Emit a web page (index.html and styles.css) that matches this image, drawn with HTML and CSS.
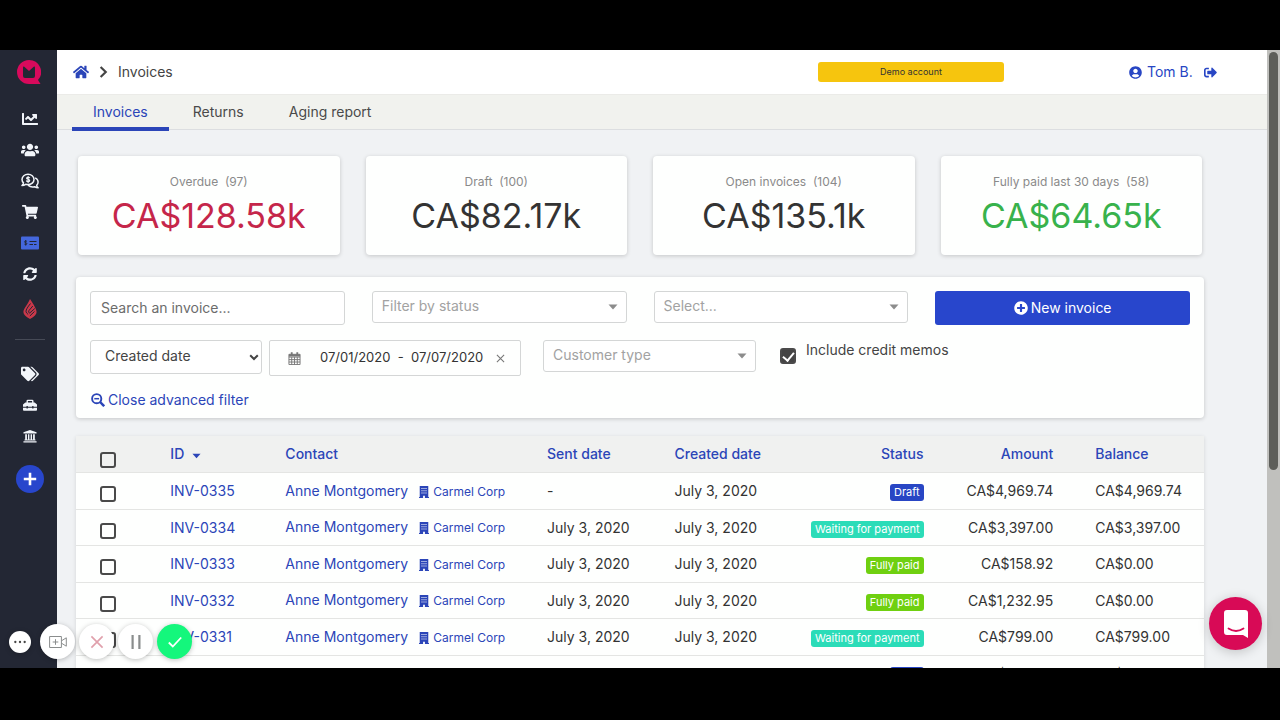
FILE: index.html
```html
<!DOCTYPE html>
<html lang="en">
<head>
    <meta charset="UTF-8">
    <meta name="viewport" content="width=device-width, initial-scale=1.0">
    <title>Invoices</title>
    <link rel="stylesheet" href="styles.css">
</head>
<body>
    <!-- Icon set -->
    <svg class="sprite" aria-hidden="true">
        <symbol id="i-logo" viewBox="0 0 24 24"><path fill="#d80a5c" d="M12 0a12 12 0 1 0 0 24h11.500l-2.500-4A12 12 0 0 0 12 0z"/><path fill="#232734" d="M6 7.500q0-1.500 1.300-.7L12 11l4.700-4.200Q18 6 18 7.500V16q0 2-2 2H8q-2 0-2-2z"/></symbol>
        <symbol id="i-chart" viewBox="0 0 512 512"><path d="M496 384H64V80c0-8.840-7.160-16-16-16H16C7.160 64 0 71.160 0 80v336c0 17.670 14.330 32 32 32h464c8.840 0 16-7.160 16-16v-32c0-8.840-7.160-16-16-16zM464 96H345.940c-21.380 0-32.090 25.850-16.970 40.970l32.400 32.400L288 242.750l-73.370-73.370c-12.500-12.500-32.760-12.500-45.250 0l-68.690 68.690c-6.250 6.250-6.250 16.380 0 22.630l22.620 22.620c6.250 6.250 16.380 6.250 22.630 0L192 237.250l73.370 73.370c12.500 12.500 32.760 12.500 45.250 0l96-96 32.400 32.400c15.120 15.120 40.970 4.410 40.970-16.970V112c.01-8.840-7.150-16-15.990-16z"/></symbol>
        <symbol id="i-users" viewBox="0 0 640 512"><path d="M96 224c35.300 0 64-28.700 64-64s-28.700-64-64-64-64 28.700-64 64 28.700 64 64 64zm448 0c35.300 0 64-28.700 64-64s-28.700-64-64-64-64 28.700-64 64 28.700 64 64 64zm32 32h-64c-17.600 0-33.500 7.100-45.100 18.600 40.300 22.100 68.900 62 75.100 109.400h66c17.700 0 32-14.300 32-32v-32c0-35.300-28.700-64-64-64zm-256 0c61.900 0 112-50.100 112-112S381.900 32 320 32 208 82.100 208 144s50.100 112 112 112zm76.800 32h-8.300c-20.800 10-43.900 16-68.500 16s-47.600-6-68.500-16h-8.300C179.600 288 128 339.600 128 403.200V432c0 26.500 21.500 48 48 48h288c26.500 0 48-21.500 48-48v-28.800c0-63.600-51.600-115.200-115.200-115.200zm-223.700-13.400C161.500 263.100 145.600 256 128 256H64c-35.300 0-64 28.700-64 64v32c0 17.700 14.300 32 32 32h65.900c6.300-47.400 34.900-87.300 75.200-109.400z"/></symbol>
        <symbol id="i-comments" viewBox="0 0 18 16"><g fill="none" stroke="currentColor" stroke-width="1.500" stroke-linecap="round" stroke-linejoin="round"><path d="M7 1.200C3.700 1.200 1 3.500 1 6.400c0 1.400.6 2.600 1.500 3.500-.2 1-.8 1.900-1.500 2.600 1.400 0 2.700-.5 3.700-1.200.7.2 1.500.3 2.300.3 3.300 0 6-2.300 6-5.200S10.300 1.200 7 1.200z"/><path d="M14.500 5.200c1.600.8 2.600 2.200 2.600 3.900 0 1.300-.6 2.400-1.400 3.200.2 1 .6 1.800 1.400 2.500-1.300 0-2.500-.4-3.500-1.100-2.400.6-4.800 0-6.200-1.300"/><path stroke-width="1.200" d="M8.600 4.700C7.800 4 5.600 4 5.600 5.300c0 1.500 3.100.7 3.100 2.200 0 1.300-2.300 1.300-3.200.5M7.100 3.400v6"/></g></symbol>
        <symbol id="i-cart" viewBox="0 0 576 512"><path d="M528.120 301.319l47.273-208C578.806 78.301 567.391 64 551.990 64H159.208l-9.166-44.810C147.758 8.021 137.930 0 126.529 0H24C10.745 0 0 10.745 0 24v16c0 13.255 10.745 24 24 24h69.883l70.248 343.435C147.325 417.100 136 435.222 136 456c0 30.928 25.072 56 56 56s56-25.072 56-56c0-15.674-6.447-29.835-16.824-40h209.647C430.447 426.165 424 440.326 424 456c0 30.928 25.072 56 56 56s56-25.072 56-56c0-22.172-12.888-41.332-31.579-50.405l5.517-24.276c3.413-15.018-8.002-29.319-23.403-29.319H218.117l-6.545-32h293.145c11.206 0 20.920-7.754 23.403-18.681z"/></symbol>
        <symbol id="i-check-note" viewBox="0 0 18 14"><rect width="18" height="13" y=".5" rx="1"/><g fill="none" stroke="#232734"><path stroke-width=".9" d="M5.800 5.400c-.7-.6-2.300-.5-2.300.5 0 1.200 2.400.6 2.400 1.800 0 1-1.700 1.100-2.500.4M4.700 4v5.600"/><path d="M8.500 5.500h7M8.500 8.500h3.500M13 8.500h2.500"/></g></symbol>
        <symbol id="i-sync" viewBox="0 0 512 512"><path d="M370.720 133.280C339.458 104.008 298.888 87.962 255.848 88c-77.458.068-144.328 53.178-162.791 126.850-1.344 5.363-6.122 9.150-11.651 9.150H24.103c-7.498 0-13.194-6.807-11.807-14.176C33.933 94.924 134.813 8 256 8c66.448 0 126.791 26.136 171.315 68.685L463.030 40.970C478.149 25.851 504 36.559 504 57.941V192c0 13.255-10.745 24-24 24H345.941c-21.382 0-32.090-25.851-16.971-40.971l41.750-41.749zM32 296h134.059c21.382 0 32.090 25.851 16.971 40.971l-41.750 41.750c31.262 29.273 71.835 45.319 114.876 45.280 77.418-.07 144.315-53.144 162.787-126.849 1.344-5.363 6.122-9.150 11.651-9.150h57.304c7.498 0 13.194 6.807 11.807 14.176C478.067 417.076 377.187 504 256 504c-66.448 0-126.791-26.136-171.315-68.685L48.970 471.030C33.851 486.149 8 475.441 8 454.059V320c0-13.255 10.745-24 24-24z"/></symbol>
        <symbol id="i-flame" viewBox="0 0 14 20"><path fill="#c9384a" d="M7 0C8.500 2.500 13.600 9.200 13.600 13q0 3.500-6.600 7Q.4 16.500.4 13C.4 9.800 5 5 7 0z"/><path fill="none" stroke="#232734" stroke-width="1" d="M7.500 4.500Q3 10 3 12.300q0 1.700 2.200 3.200M9.800 7L6 11.500q-1 1.500.5 2.700L11.800 9.500M6.800 17l4.700-4.500"/></symbol>
        <symbol id="i-tags" viewBox="0 0 640 512"><path d="M497.941 225.941L286.059 14.059A48 48 0 0 0 252.118 0H48C21.490 0 0 21.490 0 48v204.118a48 48 0 0 0 14.059 33.941l211.882 211.882c18.744 18.745 49.136 18.746 67.882 0l204.118-204.118c18.745-18.745 18.745-49.137 0-67.882zM112 160c-26.510 0-48-21.490-48-48s21.490-48 48-48 48 21.490 48 48-21.490 48-48 48zm513.941 133.823L421.823 497.941c-18.745 18.745-49.137 18.745-67.882 0l-.36-.36L527.640 323.522c16.999-16.999 26.360-39.600 26.360-63.640s-9.362-46.641-26.360-63.640L331.397 0h48.721a48 48 0 0 1 33.941 14.059l211.882 211.882c18.745 18.745 18.745 49.137 0 67.882z"/></symbol>
        <symbol id="i-toolbox" viewBox="0 0 16 14"><path fill-rule="evenodd" d="M4 4V2.500Q4 1 5.500 1h5Q12 1 12 2.500V4h1.300L16 6.500V9h-4V8h-1.500v1h-5V8H4v1H0V6.500L2.700 4zm1.600 0h4.800V2.500H5.600zM0 10h4v1h1.500v-1h5v1H12v-1h4v2.500q0 1-1 1H1q-1 0-1-1z"/></symbol>
        <symbol id="i-bank" viewBox="0 0 16 16"><path d="M8 1l7.500 2.800V5H.5V3.800zM2.500 6h2v6h1.200V6h1.600v6h1.400V6h1.600v6h1.200V6h2v6h.8v1.200H1.700V12h.8zM.5 13.900h15V15.500H.5z"/></symbol>
        <symbol id="i-plus" viewBox="0 0 14 14"><path d="M5.700.8h2.600v4.900h4.900v2.600H8.300v4.900H5.700V8.300H.8V5.700h4.900z"/></symbol>
        <symbol id="i-home" viewBox="0 0 576 512"><path d="M280.370 148.260L96 300.110V464a16 16 0 0 0 16 16l112.060-.29a16 16 0 0 0 15.920-16V368a16 16 0 0 1 16-16h64a16 16 0 0 1 16 16v95.640a16 16 0 0 0 16 16.050L464 480a16 16 0 0 0 16-16V300L295.670 148.260a12.190 12.190 0 0 0-15.300 0zM571.600 251.470L488 182.560V44.050a12 12 0 0 0-12-12h-56a12 12 0 0 0-12 12v72.610L318.470 43a48 48 0 0 0-61 0L4.340 251.470a12 12 0 0 0-1.600 16.900l25.500 31A12 12 0 0 0 45.150 301l235.220-193.740a12.190 12.190 0 0 1 15.300 0L530.900 301a12 12 0 0 0 16.900-1.600l25.500-31a12 12 0 0 0-1.700-16.930z"/></symbol>
        <symbol id="i-right" viewBox="0 0 10 14"><path fill="none" stroke="currentColor" stroke-width="2.400" d="M1.800 1.500L7.500 7l-5.700 5.500"/></symbol>
        <symbol id="i-user" viewBox="0 0 496 512"><path d="M248 8C111 8 0 119 0 256s111 248 248 248 248-111 248-248S385 8 248 8zm0 96c48.600 0 88 39.400 88 88s-39.400 88-88 88-88-39.400-88-88 39.400-88 88-88zm0 344c-58.700 0-111.300-26.600-146.500-68.200 18.800-35.400 55.600-59.800 98.500-59.800 2.400 0 4.800.4 7.100 1.100 13 4.200 26.600 6.900 40.900 6.900 14.300 0 28-2.700 40.900-6.900 2.300-.7 4.700-1.100 7.100-1.100 42.900 0 79.700 24.400 98.500 59.800C359.300 421.400 306.700 448 248 448z"/></symbol>
        <symbol id="i-logout" viewBox="0 0 512 512"><path d="M497 273L329 441c-15 15-41 4.500-41-17v-96H152c-13.300 0-24-10.700-24-24v-96c0-13.300 10.700-24 24-24h136V88c0-21.400 25.900-32 41-17l168 168c9.300 9.400 9.300 24.600 0 34zM192 436v-40c0-6.600-5.400-12-12-12H96c-17.700 0-32-14.300-32-32V160c0-17.700 14.300-32 32-32h84c6.600 0 12-5.400 12-12V76c0-6.600-5.400-12-12-12H96c-53 0-96 43-96 96v192c0 53 43 96 96 96h84c6.600 0 12-5.400 12-12z"/></symbol>
        <symbol id="i-plus-circle" viewBox="0 0 512 512"><path d="M256 8C119 8 8 119 8 256s111 248 248 248 248-111 248-248S393 8 256 8zm144 276c0 6.600-5.400 12-12 12h-92v92c0 6.600-5.400 12-12 12h-56c-6.600 0-12-5.400-12-12v-92h-92c-6.600 0-12-5.400-12-12v-56c0-6.600 5.400-12 12-12h92v-92c0-6.600 5.400-12 12-12h56c6.600 0 12 5.400 12 12v92h92c6.600 0 12 5.400 12 12v56z"/></symbol>
        <symbol id="i-zoom-out" viewBox="0 0 14 14"><g fill="none" stroke="currentColor" stroke-width="1.900"><circle cx="5.700" cy="5.700" r="4.600"/><path stroke-width="2.400" d="M9 9l4.200 4.200"/><path stroke-width="1.500" d="M3.300 5.700h4.800"/></g></symbol>
        <symbol id="i-building" viewBox="0 0 11 13"><path fill-rule="evenodd" d="M.8 0h9.400v12H11v1H6.500v-2.500h-2V13H0v-1h.8zM2.700 2v1.200h1.200V2zM4.900 2v1.200h1.200V2zM7.100 2v1.200h1.200V2zM2.700 4.500v1.200h1.200V4.500zM4.900 4.500v1.200h1.200V4.500zM7.100 4.500v1.200h1.200V4.500zM2.700 7v1.200h1.200V7zM4.900 7v1.200h1.200V7zM7.100 7v1.200h1.200V7z"/></symbol>
        <symbol id="i-caret" viewBox="0 0 10 6"><path d="M.5.500h9L5 5.500z"/></symbol>
        <symbol id="i-chevron" viewBox="0 0 10 7"><path fill="none" stroke="currentColor" stroke-width="2" d="M1.200 1.200L5 5l3.800-3.800"/></symbol>
        <symbol id="i-calendar" viewBox="0 0 14 14"><path fill="none" stroke="currentColor" d="M1 2.500h12v11H1zM1 5.500h12M1 8.200h12M1 10.800h12M4 5.500v8M7 5.500v8M10 5.500v8"/><path d="M1 2.500h12v2.300H1zM3 .3h2v3H3zM9 .3h2v3H9z"/></symbol>
        <symbol id="i-times" viewBox="0 0 10 10"><path fill="none" stroke="currentColor" stroke-width="1.200" d="M1 1l8 8M9 1L1 9"/></symbol>
        <symbol id="i-camera" viewBox="0 0 18 14"><path fill="none" stroke="currentColor" d="M.6 1.500h11.800v11H.6zM12.500 5.800l4.800-3v8.400l-4.800-3M6.500 4.200v5.600M3.700 7h5.600"/></symbol>
        <symbol id="i-chat" viewBox="0 0 26 30"><path fill="#fff" d="M4 1h18q3 0 3 3v25l-5-3H4q-3 0-3-3V4q0-3 3-3z"/><path fill="none" stroke="#d80a56" stroke-width="1.800" stroke-linecap="round" d="M5.500 19.500q7.500 5 15 0"/></symbol>
    </svg>

    <div class="app">
        <nav class="sidebar" aria-label="Main">
            <a href="#" class="logo" aria-label="Home"><svg><use href="#i-logo"/></svg></a>
            <a href="#" aria-label="Reports"><svg class="s16"><use href="#i-chart"/></svg></a>
            <a href="#" aria-label="Contacts"><svg><use href="#i-users"/></svg></a>
            <a href="#" aria-label="Quotes"><svg><use href="#i-comments"/></svg></a>
            <a href="#" aria-label="Orders"><svg class="s16"><use href="#i-cart"/></svg></a>
            <a href="#" class="current" aria-label="Invoices"><svg><use href="#i-check-note"/></svg></a>
            <a href="#" aria-label="Sync"><svg class="s14"><use href="#i-sync"/></svg></a>
            <a href="#" class="flame" aria-label="Lightspeed"><svg class="s20"><use href="#i-flame"/></svg></a>
            <hr>
            <a href="#" aria-label="Products"><svg><use href="#i-tags"/></svg></a>
            <a href="#" aria-label="Tools"><svg class="s14"><use href="#i-toolbox"/></svg></a>
            <a href="#" aria-label="Bank"><svg class="s14"><use href="#i-bank"/></svg></a>
            <button class="add-btn" aria-label="Add"><svg><use href="#i-plus"/></svg></button>
        </nav>

        <main>
            <header class="topbar">
                <div class="breadcrumb">
                    <a href="#" aria-label="Home"><svg class="home"><use href="#i-home"/></svg></a>
                    <svg class="sep"><use href="#i-right"/></svg>
                    <span>Invoices</span>
                </div>
                <button class="demo">Demo account</button>
                <div class="account">
                    <a href="#"><svg><use href="#i-user"/></svg>Tom B.</a>
                    <a href="#" aria-label="Log out"><svg><use href="#i-logout"/></svg></a>
                </div>
            </header>

            <nav class="tabs" aria-label="Sections">
                <a href="#" class="active">Invoices</a>
                <a href="#">Returns</a>
                <a href="#">Aging report</a>
            </nav>

            <div class="content">
                <section class="cards">
                    <div class="card red"><p>Overdue &nbsp;(97)</p><strong>CA$128.58k</strong></div>
                    <div class="card"><p>Draft &nbsp;(100)</p><strong>CA$82.17k</strong></div>
                    <div class="card"><p>Open invoices &nbsp;(104)</p><strong>CA$135.1k</strong></div>
                    <div class="card green"><p>Fully paid last 30 days &nbsp;(58)</p><strong>CA$64.65k</strong></div>
                </section>

                <form class="filters">
                    <div class="filter-row">
                        <input type="text" class="field" placeholder="Search an invoice..." aria-label="Search an invoice">
                        <div class="select muted">
                            <select class="field" aria-label="Filter by status"><option>Filter by status</option></select>
                            <svg><use href="#i-caret"/></svg>
                        </div>
                        <div class="select muted">
                            <select class="field" aria-label="Select"><option>Select...</option></select>
                            <svg><use href="#i-caret"/></svg>
                        </div>
                        <button type="button" class="new-btn"><svg><use href="#i-plus-circle"/></svg>New invoice</button>
                    </div>
                    <div class="filter-row advanced">
                        <div class="dates">
                            <div class="select native">
                                <select class="field" aria-label="Date type"><option>Created date</option></select>
                                <svg><use href="#i-chevron"/></svg>
                            </div>
                            <div class="range">
                                <svg><use href="#i-calendar"/></svg>
                                <input type="text" value="07/01/2020  -  07/07/2020" aria-label="Date range">
                                <button type="button" aria-label="Clear dates"><svg><use href="#i-times"/></svg></button>
                            </div>
                        </div>
                        <div class="select muted">
                            <select class="field" aria-label="Customer type"><option>Customer type</option></select>
                            <svg><use href="#i-caret"/></svg>
                        </div>
                        <div class="memos">
                            <input type="checkbox" id="memos" checked>
                            <label for="memos">Include credit memos</label>
                        </div>
                    </div>
                    <a href="#" class="close-filter"><svg><use href="#i-zoom-out"/></svg>Close advanced filter</a>
                </form>

                <table class="invoices">
                    <colgroup>
                        <col class="c-check"><col class="c-id"><col class="c-contact"><col class="c-sent">
                        <col class="c-created"><col class="c-status"><col class="c-amount"><col class="c-balance">
                    </colgroup>
                    <thead>
                        <tr>
                            <th class="check"><input type="checkbox" aria-label="Select all"></th>
                            <th><a href="#">ID<svg class="sort"><use href="#i-caret"/></svg></a></th>
                            <th><a href="#">Contact</a></th>
                            <th><a href="#">Sent date</a></th>
                            <th><a href="#">Created date</a></th>
                            <th class="right"><a href="#">Status</a></th>
                            <th class="right"><a href="#">Amount</a></th>
                            <th><a href="#">Balance</a></th>
                        </tr>
                    </thead>
                    <tbody>
                        <tr>
                            <td class="check"><input type="checkbox" aria-label="Select INV-0335"></td>
                            <td><a href="#">INV-0335</a></td>
                            <td><a href="#">Anne Montgomery</a><a href="#" class="company"><svg><use href="#i-building"/></svg>Carmel Corp</a></td>
                            <td>-</td>
                            <td>July 3, 2020</td>
                            <td class="right"><span class="badge draft">Draft</span></td>
                            <td class="right">CA$4,969.74</td>
                            <td>CA$4,969.74</td>
                        </tr>
                        <tr>
                            <td class="check"><input type="checkbox" aria-label="Select INV-0334"></td>
                            <td><a href="#">INV-0334</a></td>
                            <td><a href="#">Anne Montgomery</a><a href="#" class="company"><svg><use href="#i-building"/></svg>Carmel Corp</a></td>
                            <td>July 3, 2020</td>
                            <td>July 3, 2020</td>
                            <td class="right"><span class="badge waiting">Waiting for payment</span></td>
                            <td class="right">CA$3,397.00</td>
                            <td>CA$3,397.00</td>
                        </tr>
                        <tr>
                            <td class="check"><input type="checkbox" aria-label="Select INV-0333"></td>
                            <td><a href="#">INV-0333</a></td>
                            <td><a href="#">Anne Montgomery</a><a href="#" class="company"><svg><use href="#i-building"/></svg>Carmel Corp</a></td>
                            <td>July 3, 2020</td>
                            <td>July 3, 2020</td>
                            <td class="right"><span class="badge paid">Fully paid</span></td>
                            <td class="right">CA$158.92</td>
                            <td>CA$0.00</td>
                        </tr>
                        <tr>
                            <td class="check"><input type="checkbox" aria-label="Select INV-0332"></td>
                            <td><a href="#">INV-0332</a></td>
                            <td><a href="#">Anne Montgomery</a><a href="#" class="company"><svg><use href="#i-building"/></svg>Carmel Corp</a></td>
                            <td>July 3, 2020</td>
                            <td>July 3, 2020</td>
                            <td class="right"><span class="badge paid">Fully paid</span></td>
                            <td class="right">CA$1,232.95</td>
                            <td>CA$0.00</td>
                        </tr>
                        <tr>
                            <td class="check"><input type="checkbox" aria-label="Select INV-0331"></td>
                            <td><a href="#">INV-0331</a></td>
                            <td><a href="#">Anne Montgomery</a><a href="#" class="company"><svg><use href="#i-building"/></svg>Carmel Corp</a></td>
                            <td>July 3, 2020</td>
                            <td>July 3, 2020</td>
                            <td class="right"><span class="badge waiting">Waiting for payment</span></td>
                            <td class="right">CA$799.00</td>
                            <td>CA$799.00</td>
                        </tr>
                        <tr>
                            <td class="check"></td>
                            <td></td>
                            <td></td>
                            <td></td>
                            <td>July 3, 2020</td>
                            <td class="right"><span class="badge draft">Draft</span></td>
                            <td class="right">CA$799.00</td>
                            <td>CA$799.00</td>
                        </tr>
                    </tbody>
                </table>
            </div>
        </main>

        <div class="scrollbar"><div class="thumb"></div></div>

        <div class="recorder">
            <button class="dots" aria-label="More"><svg viewBox="0 0 12 4"><circle cx="2" cy="2" r="1"/><circle cx="6" cy="2" r="1"/><circle cx="10" cy="2" r="1"/></svg></button>
            <button aria-label="Camera"><svg class="s20"><use href="#i-camera"/></svg></button>
            <button class="cancel" aria-label="Cancel"><svg><use href="#i-times"/></svg></button>
            <button aria-label="Pause"><svg viewBox="0 0 14 14"><path d="M2.500 0h2.200v14H2.500zM9.300 0h2.200v14H9.300z"/></svg></button>
            <button class="done" aria-label="Finish"><svg viewBox="0 0 14 14"><path fill="none" stroke="currentColor" stroke-width="1.800" d="M.8 7.500L4.800 11.500 13.200 2.500"/></svg></button>
        </div>

        <button class="chat" aria-label="Open chat"><svg><use href="#i-chat"/></svg></button>
    </div>
</body>
</html>
```

FILE: styles.css
```css
* {
    box-sizing: border-box;
}
body {
    margin: 0;
    height: 100vh;
    padding: 50px 0 52px;
    background: #000;
    color: #333;
    font-family: Inter, "Liberation Sans", sans-serif;
    font-size: 14px;
    line-height: 20px;
    overflow: hidden;
}
a {
    color: #2b45b8;
    text-decoration: none;
}
button, input, select {
    font: inherit;
    color: inherit;
}
button {
    border: none;
    padding: 0;
    cursor: pointer;
}
svg {
    fill: currentColor;
    flex: none;
}
.sprite {
    position: absolute;
    width: 0;
    height: 0;
}
.app {
    position: relative;
    display: flex;
    height: 100%;
    overflow: hidden;
    background: #f0f2f4;
}

/* Sidebar */
.sidebar {
    flex: none;
    width: 57px;
    padding: 9px 0 0 3px;
    display: flex;
    flex-direction: column;
    align-items: center;
    background: #232734;
}
.sidebar a {
    display: flex;
    align-items: center;
    height: 31px;
    color: #f2f5fa;
}
.sidebar svg {
    width: 18px;
    height: 16px;
}
.sidebar .logo {
    height: 26px;
    margin: 0 3px 18px 0;
}
.sidebar .logo svg {
    width: 24px;
    height: 24px;
}
.sidebar .s16 {
    width: 16px;
}
.sidebar .s14 {
    width: 14px;
    height: 14px;
}
.sidebar .s20 {
    height: 20px;
}
.sidebar .current {
    color: #4467dc;
}
.sidebar .flame {
    margin-top: 4px;
}
.sidebar hr {
    width: 30px;
    margin: 15px 0 18px;
    border: none;
    border-top: 1px solid #464a56;
}
.add-btn {
    width: 28px;
    height: 28px;
    margin-top: 14px;
    display: flex;
    align-items: center;
    justify-content: center;
    border-radius: 50%;
    background: #2846cc;
    color: #fff;
}
.sidebar .add-btn svg {
    width: 14px;
    height: 14px;
}

/* Header */
main {
    flex: 1;
    min-width: 0;
    overflow: hidden;
}
.topbar {
    display: flex;
    align-items: center;
    height: 44px;
    padding: 0 50px 0 16px;
    background: #fff;
}
.breadcrumb {
    flex: 1;
    display: flex;
    align-items: center;
    gap: 10px;
    color: #444;
}
.breadcrumb a {
    display: flex;
}
.home {
    width: 16px;
    height: 16px;
}
.sep {
    width: 9px;
    height: 14px;
}
.demo {
    width: 186px;
    height: 20px;
    margin-right: 125px;
    border-radius: 3px;
    background: #f6c50e;
    font-size: 9px;
}
.account {
    display: flex;
    justify-content: space-between;
    width: 88px;
}
.account a {
    display: flex;
    align-items: center;
    gap: 5px;
    color: #2846c4;
}
.account svg {
    width: 13px;
    height: 13px;
}
.tabs {
    display: flex;
    gap: 3px;
    height: 36px;
    padding-left: 15px;
    border-top: 1px solid #ebebe8;
    border-bottom: 1px solid #dcdee0;
    background: #f1f2ee;
}
.tabs a {
    height: 36px;
    padding: 7px 21px 0;
    border-bottom: 4px solid transparent;
    color: #4a4a4a;
}
.tabs .active {
    color: #2b45b8;
    border-color: #2b45b8;
}

/* Totals */
.content {
    padding: 26px 63px 0 19px;
}
.cards {
    display: grid;
    grid-template-columns: repeat(4, 1fr);
    gap: 26px;
    padding: 0 2px;
    margin-bottom: 22px;
}
.card {
    padding: 18px 0 15px;
    text-align: center;
    border-radius: 4px;
    background: #fefffe;
    box-shadow: 0 1px 4px rgba(0,0,0,0.18);
}
.card p {
    margin: 0 0 2px;
    font-size: 12px;
    line-height: 16px;
    color: #8a8a8a;
}
.card strong {
    display: block;
    font-size: 34px;
    line-height: 48px;
    font-weight: 400;
}
.red strong {
    color: #c5264a;
}
.green strong {
    color: #38b24c;
}

/* Filters */
.filters {
    padding: 14px 14px 8px;
    margin-bottom: 18px;
    border-radius: 4px;
    background: #fefffe;
    box-shadow: 0 1px 4px rgba(0,0,0,0.18);
}
.filter-row {
    display: grid;
    grid-template-columns: repeat(4, 1fr);
    gap: 27px;
    align-items: start;
    margin-bottom: 15px;
}
.advanced {
    grid-template-columns: 431fr 213fr 412fr;
    gap: 22px;
    margin-bottom: 14px;
}
.field {
    display: block;
    width: 100%;
    height: 34px;
    padding: 0 10px 2px;
    border: 1px solid #d4d6d6;
    border-radius: 3px;
    background: #fff;
    color: #444;
    appearance: none;
}
.field::placeholder {
    color: #6c6c6c;
}
.select {
    position: relative;
}
.select svg {
    position: absolute;
    top: 13px;
    right: 9px;
    width: 10px;
    height: 6px;
    color: #8c8c8c;
    pointer-events: none;
}
.muted .field {
    height: 32px;
    padding: 0 9px 2px;
    color: #a2a2a2;
}
.native .field {
    padding: 0 14px 2px;
}
.native svg {
    right: 3px;
    top: 14px;
    height: 7px;
    color: #444;
}
.new-btn {
    display: flex;
    align-items: center;
    justify-content: center;
    gap: 3px;
    height: 34px;
    border-radius: 3px;
    background: #2846cc;
    color: #fff;
}
.new-btn svg {
    width: 14px;
    height: 14px;
}
.dates {
    display: grid;
    grid-template-columns: 172fr 252fr;
    gap: 7px;
    align-items: start;
}
.range {
    display: flex;
    align-items: center;
    min-width: 0;
    height: 36px;
    padding: 0 15px 0 18px;
    border: 1px solid #d4d6d6;
    border-radius: 2px;
    color: #777;
}
.range svg {
    width: 13px;
    height: 13px;
}
.range input {
    flex: 1;
    min-width: 0;
    padding: 0 0 2px 19px;
    border: none;
    background: none;
    font-size: 13px;
    color: #333;
}
.range button {
    display: flex;
    background: none;
}
.range button svg {
    width: 9px;
    height: 9px;
}
.memos {
    display: flex;
    gap: 10px;
    padding-left: 2px;
    color: #444;
}
.memos input {
    margin: 8px 0 0;
}
.close-filter {
    display: flex;
    align-items: center;
    gap: 3px;
    padding-left: 1px;
}
.close-filter svg {
    width: 14px;
    height: 14px;
}
input[type="checkbox"] {
    flex: none;
    appearance: none;
    display: block;
    width: 16px;
    height: 16px;
    border: 2px solid #4a4a4a;
    border-radius: 3px;
}
input[type="checkbox"]:checked {
    background: #444;
}
input[type="checkbox"]:checked::before {
    content: "";
    display: block;
    width: 5px;
    height: 9px;
    margin: 0 auto;
    border: solid #fff;
    border-width: 0 2px 2px 0;
    transform: rotate(40deg);
}

/* Invoice list */
.invoices {
    width: 100%;
    table-layout: fixed;
    border-collapse: separate;
    border-spacing: 0;
    background: #fefffe;
    box-shadow: 0 1px 4px rgba(0,0,0,0.12);
}
.c-check { width: 6.5%; }
.c-id { width: 10.2%; }
.c-contact { width: 23.2%; }
.c-sent { width: 11.3%; }
.c-created { width: 12%; }
.c-status { width: 13.8%; }
.c-amount { width: 11.5%; }
.c-balance { width: 11.5%; }
.invoices th, .invoices td {
    height: 37px;
    padding: 0 21px;
    border-bottom: 1px solid #e4e5e3;
    text-align: left;
    white-space: nowrap;
}
.invoices th {
    font-weight: 500;
    background: #f0f1f0;
}
.invoices tr:nth-child(even) td {
    height: 36px;
}
.invoices .right {
    text-align: right;
}
.invoices .check {
    padding: 6px 0 0 24px;
}
.invoices th.check {
    padding-top: 12px;
}
.invoices .check input {
    margin: 0;
}
.sort {
    width: 9px;
    height: 6px;
    margin-left: 8px;
}
.company {
    margin-left: 11px;
    font-size: 12px;
}
.company svg {
    width: 10px;
    height: 12px;
    margin-right: 4px;
    vertical-align: -2px;
}
.badge {
    display: inline-block;
    padding: 0 4px;
    border-radius: 3px;
    font-size: 11px;
    line-height: 17px;
    color: #fff;
}
.draft { background: #2846c4; }
.waiting { background: #2bdcb8; }
.paid { background: #6fd010; }

/* Page scrollbar */
.scrollbar {
    flex: none;
    width: 13px;
    padding: 2px;
    background: #c0c0bd;
}
.thumb {
    height: 68%;
    border-radius: 5px;
    background: #5d5e5a;
}

/* Floating controls */
.recorder {
    position: absolute;
    left: 9px;
    bottom: 9px;
    display: flex;
    align-items: center;
    gap: 4px;
}
.recorder button {
    display: flex;
    align-items: center;
    justify-content: center;
    width: 35px;
    height: 35px;
    border-radius: 50%;
    background: #fff;
    color: #8a8d8d;
    box-shadow: 0 1px 5px rgba(0,0,0,0.25);
}
.recorder svg {
    width: 14px;
    height: 14px;
}
.recorder .s20 {
    width: 20px;
}
.recorder .dots {
    width: 22px;
    height: 22px;
    margin-right: 5px;
    color: #444;
}
.recorder .cancel {
    color: #e0a0ac;
}
.recorder .done {
    background: #14f77c;
    color: #fff;
}
.chat {
    position: absolute;
    right: 18px;
    bottom: 18px;
    width: 53px;
    height: 53px;
    display: flex;
    align-items: center;
    justify-content: center;
    border-radius: 50%;
    background: #d80a56;
    box-shadow: 0 2px 12px rgba(0,0,0,0.2);
}
.chat svg {
    width: 26px;
    height: 30px;
}
```
